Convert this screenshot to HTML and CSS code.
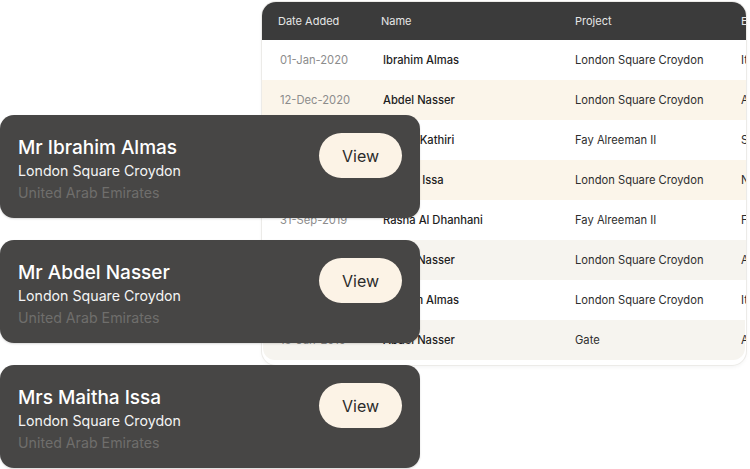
FILE: index.html
```html
<!DOCTYPE html>
<html lang="en">
<head>
<meta charset="utf-8">
<title>Clients</title>
<link rel="stylesheet" href="styles.css">
</head>
<body>
<div class="stage">
  <div class="table">
    <div class="row head">
      <div>Date Added</div><div>Name</div><div>Project</div><div>Emirate</div>
    </div>
    <div class="row">
      <div class="date">01-Jan-2020</div><div class="name">Ibrahim Almas</div><div>London Square Croydon</div><div>Italy</div>
    </div>
    <div class="row cream">
      <div class="date">12-Dec-2020</div><div class="name">Abdel Nasser</div><div>London Square Croydon</div><div>Abu Dhabi</div>
    </div>
    <div class="row">
      <div class="date">05-Nov-2019</div><div class="name">Alia Al Kathiri</div><div>Fay Alreeman II</div><div>Sharjah</div>
    </div>
    <div class="row cream">
      <div class="date">20-Oct-2019</div><div class="name">Maitha Issa</div><div>London Square Croydon</div><div>Norway</div>
    </div>
    <div class="row">
      <div class="date">31-Sep-2019</div><div class="name">Rasha Al Dhanhani</div><div>Fay Alreeman II</div><div>France</div>
    </div>
    <div class="row light">
      <div class="date">14-Aug-2019</div><div class="name">Abdel Nasser</div><div>London Square Croydon</div><div>Abu Dhabi</div>
    </div>
    <div class="row">
      <div class="date">02-Jul-2019</div><div class="name">Ibrahim Almas</div><div>London Square Croydon</div><div>Italy</div>
    </div>
    <div class="row light last">
      <div class="date">18-Jun-2019</div><div class="name">Abdel Nasser</div><div>Gate</div><div>Abu Dhabi</div>
    </div>
  </div>

  <div class="cards">
    <div class="card">
      <div class="info">
        <div class="title">Mr Ibrahim Almas</div>
        <div class="project">London Square Croydon</div>
        <div class="country">United Arab Emirates</div>
      </div>
      <button class="view">View</button>
    </div>
    <div class="card">
      <div class="info">
        <div class="title">Mr Abdel Nasser</div>
        <div class="project">London Square Croydon</div>
        <div class="country">United Arab Emirates</div>
      </div>
      <button class="view">View</button>
    </div>
    <div class="card">
      <div class="info">
        <div class="title">Mrs Maitha Issa</div>
        <div class="project">London Square Croydon</div>
        <div class="country">United Arab Emirates</div>
      </div>
      <button class="view">View</button>
    </div>
  </div>
</div>
</body>
</html>
```
FILE: styles.css
```css
* { box-sizing: border-box; }
html, body { margin: 0; padding: 0; background: #ffffff; }
body {
  font-family: "Inter", "Open Sans", sans-serif;
  width: 750px;
  height: 469px;
  overflow: hidden;
}
.stage { position: relative; width: 750px; height: 469px; padding-top: 2px; }

.table {
  margin-left: 262px;
  width: 484px;
  height: 363px;
  background: #ffffff;
  border-radius: 14px;
  overflow: hidden;
  box-shadow: 0 0 0 1px #ecebe8, 0 2px 4px rgba(0,0,0,0.05);
  padding-bottom: 5px;
}
.row {
  display: grid;
  grid-template-columns: 103px 194px 166px 100px;
  align-items: center;
  height: 40px;
  padding-left: 16px;
  font-size: 11.2px;
  color: #2e2e2e;
  white-space: nowrap;
}
.row.head {
  height: 38px;
  background: #3b3b3b;
  color: #e6e6e6;
  font-size: 11px;
}
.row.cream { background: #fbf5ea; }
.row.light { background: #f6f4ef; }
.row.last { border-radius: 0 0 12px 12px; margin: 0 1px; padding-left: 15px; }
.date { color: #8c8c8c; padding-left: 2px; }
.name { font-weight: 500; color: #1e1e1e; padding-left: 2px; }

.cards {
  position: absolute;
  left: 0;
  top: 115px;
  width: 420px;
  display: flex;
  flex-direction: column;
  gap: 22px;
}
.card {
  height: 103px;
  background: #474645;
  border-radius: 14px;
  padding: 21px 18px 14px 18px;
  display: flex;
  justify-content: space-between;
  align-items: flex-start;
  box-shadow: 0 1px 2px rgba(0,0,0,0.15);
}
.info { display: flex; flex-direction: column; }
.title {
  font-size: 19px;
  line-height: 24px;
  color: #ffffff;
  font-weight: 500;
}
.project {
  font-size: 14.2px;
  line-height: 22px;
  color: #f4f4f4;
}
.country {
  font-size: 14.2px;
  line-height: 22px;
  color: #6f6e6c;
}
.view {
  margin-top: -3px;
  width: 83px;
  height: 45px;
  border: none;
  border-radius: 23px;
  background: #fcf3e6;
  color: #2b2b2b;
  font-family: inherit;
  font-size: 16px;
  padding: 0;
}
```
